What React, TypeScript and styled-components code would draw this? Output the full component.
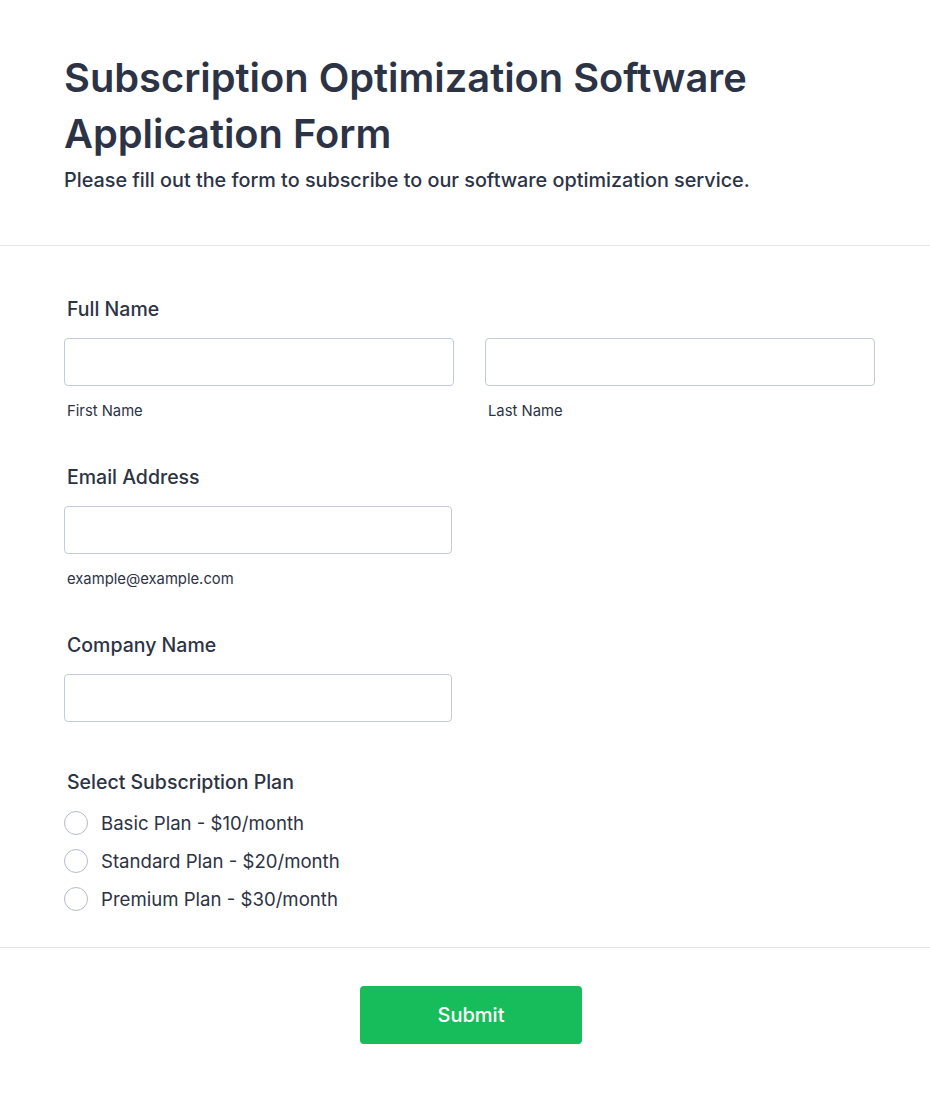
import styled, { createGlobalStyle } from 'styled-components';

const GlobalStyle = createGlobalStyle`
  html, body {
    margin: 0;
    padding: 0;
    background: #ffffff;
  }
  body {
    font-family: Inter, "Noto Sans", "Liberation Sans", sans-serif;
    color: #2c3345;
  }
  * {
    box-sizing: border-box;
  }
`;

const plans = [
  'Basic Plan - $10/month',
  'Standard Plan - $20/month',
  'Premium Plan - $30/month',
];

export default function App() {
  return (
    <>
      <GlobalStyle />
      <FormCard>
        <Header>
          <Title>Subscription Optimization Software Application Form</Title>
          <Subtitle>Please fill out the form to subscribe to our software optimization service.</Subtitle>
        </Header>

        <Body>
          <Field>
            <FieldLabel>Full Name</FieldLabel>
            <NameRow>
              <SubField>
                <TextInput type="text" />
                <Hint>First Name</Hint>
              </SubField>
              <SubField>
                <TextInput type="text" />
                <Hint>Last Name</Hint>
              </SubField>
            </NameRow>
          </Field>

          <Field>
            <FieldLabel>Email Address</FieldLabel>
            <SubField $narrow>
              <TextInput type="email" />
              <Hint>example@example.com</Hint>
            </SubField>
          </Field>

          <Field>
            <FieldLabel>Company Name</FieldLabel>
            <SubField $narrow>
              <TextInput type="text" />
            </SubField>
          </Field>

          <Field $radio>
            <FieldLabel>Select Subscription Plan</FieldLabel>
            <RadioList>
              {plans.map((plan) => (
                <RadioRow key={plan}>
                  <RadioCircle type="radio" name="plan" />
                  <RadioText>{plan}</RadioText>
                </RadioRow>
              ))}
            </RadioList>
          </Field>
        </Body>

        <Footer>
          <SubmitButton type="button">Submit</SubmitButton>
        </Footer>
      </FormCard>
    </>
  );
}

const FormCard = styled.div`
  width: 930px;
  min-height: 1094px;
  background: #ffffff;
`;

const Header = styled.div`
  padding: 50px 64px 52px;
  border-bottom: 1px solid #e3e5ea;
`;

const Title = styled.h1`
  margin: 0;
  max-width: 740px;
  font-size: 39.8px;
  line-height: 56px;
  font-weight: 600;
  color: #2c3345;
`;

const Subtitle = styled.p`
  margin: 5px 0 0;
  font-size: 19.8px;
  line-height: 26px;
  font-weight: 500;
  color: #2c3345;
`;

const Body = styled.div`
  padding: 51px 55px 22px 64px;
  display: flex;
  flex-direction: column;
  gap: 43px;
  border-bottom: 1px solid #e3e5ea;
`;

const Field = styled.div<{ $radio?: boolean }>`
  display: flex;
  flex-direction: column;
  gap: 17px;
  margin-top: ${(p) => (p.$radio ? '3px' : '0')};
`;

const FieldLabel = styled.label`
  padding-left: 3px;
  font-size: 19.5px;
  line-height: 24px;
  font-weight: 500;
  color: #2c3345;
`;

const NameRow = styled.div`
  display: grid;
  grid-template-columns: 390px 390px;
  gap: 31px;
`;

const SubField = styled.div<{ $narrow?: boolean }>`
  display: flex;
  flex-direction: column;
  gap: 16px;
  width: ${(p) => (p.$narrow ? '388px' : 'auto')};
  padding-bottom: 2px;
`;

const TextInput = styled.input`
  width: 100%;
  height: 48px;
  border: 1px solid #c3cad8;
  border-radius: 4px;
  background: #ffffff;
  padding: 0 12px;
  font-family: inherit;
  font-size: 16px;
  outline: none;
`;

const Hint = styled.span`
  padding-left: 3px;
  font-size: 14.8px;
  line-height: 18px;
  color: #2c3345;
`;

const RadioList = styled.div`
  display: flex;
  flex-direction: column;
  gap: 14px;
  margin-bottom: 14px;
`;

const RadioRow = styled.label`
  display: flex;
  align-items: center;
  gap: 13px;
  height: 24px;
`;

const RadioCircle = styled.input`
  appearance: none;
  margin: 0;
  width: 24px;
  height: 24px;
  border: 1px solid #b4bac6;
  border-radius: 50%;
  background: #ffffff;
`;

const RadioText = styled.span`
  font-size: 18.6px;
  line-height: 24px;
  color: #2c3345;
`;

const Footer = styled.div`
  display: flex;
  justify-content: center;
  padding: 38px 0 48px;
`;

const SubmitButton = styled.button`
  width: 222px;
  height: 58px;
  margin-left: 12px;
  border: none;
  border-radius: 4px;
  background: #18bd5b;
  color: #ffffff;
  font-family: inherit;
  font-size: 20px;
  font-weight: 500;
`;
